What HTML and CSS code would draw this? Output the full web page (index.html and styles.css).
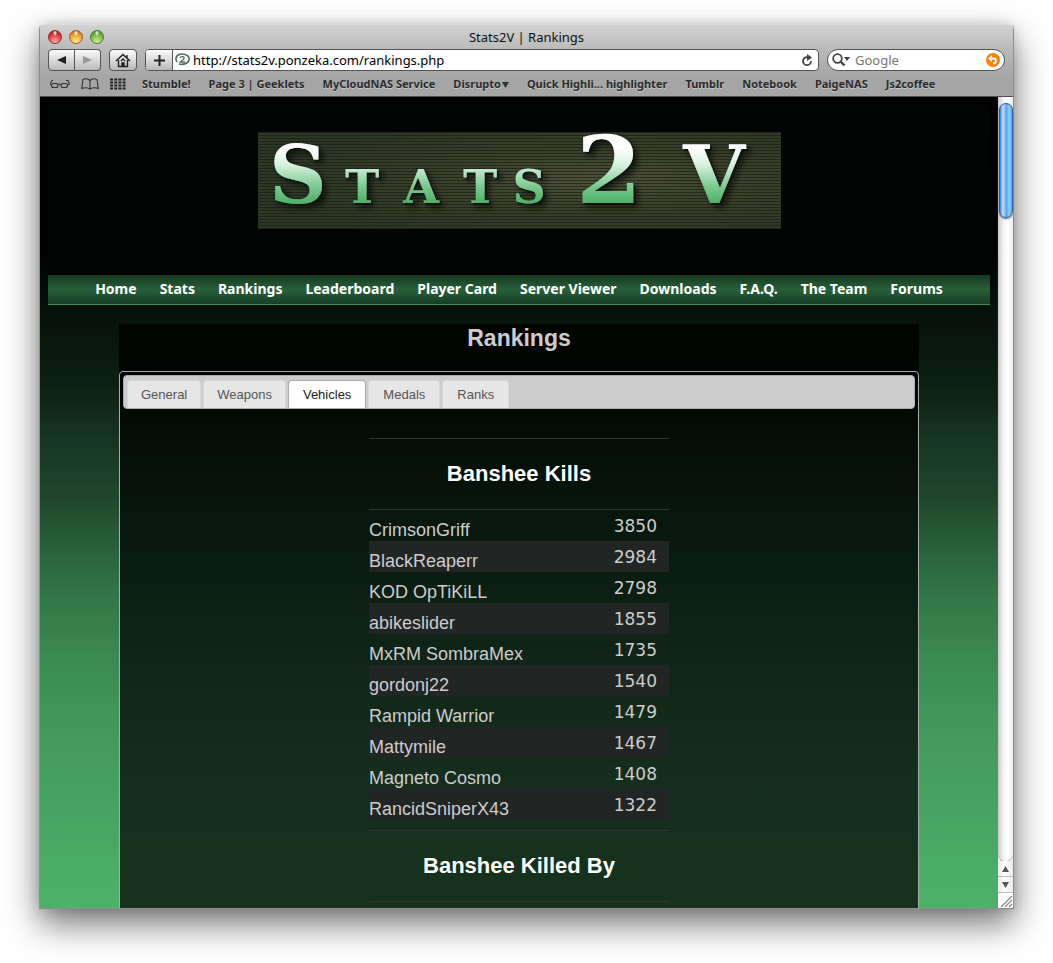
FILE: index.html
```html
<!DOCTYPE html>
<html lang="en">
<head>
<meta charset="utf-8">
<title>Stats2V | Rankings</title>
<link rel="stylesheet" href="styles.css">
</head>
<body>
<div class="window">
  <header class="chrome">
    <div class="titlebar">
      <div class="lights">
        <button class="light red" aria-label="Close"></button>
        <button class="light amber" aria-label="Minimize"></button>
        <button class="light green" aria-label="Zoom"></button>
      </div>
      <span class="window-title">Stats2V | Rankings</span>
    </div>
    <div class="toolbar">
      <div class="history">
        <button class="tool" aria-label="Back"><svg width="11" height="10" viewBox="0 0 11 10"><path d="M10 1v8L1 5z" fill="#222"/></svg></button>
        <button class="tool" aria-label="Forward"><svg width="11" height="10" viewBox="0 0 11 10"><path d="M1 1v8l9-4z" fill="#999"/></svg></button>
      </div>
      <button class="tool home" aria-label="Home"><svg width="16" height="15" viewBox="0 0 16 15" fill="none" stroke="#222" stroke-width="1.4"><path d="M1 8l7-6.500L15 8M12 5V2M3.500 7v6.500h9V7"/><path d="M6 8l2-2 2 2" /><path d="M7 10h2v3H7z" fill="#222"/></svg></button>
      <div class="address">
        <button class="tool add" aria-label="Add bookmark"><svg width="11" height="11" viewBox="0 0 11 11"><path d="M5.500 0v11M0 5.500h11" stroke="#222" stroke-width="2"/></svg></button>
        <svg class="favicon" width="16" height="14" viewBox="0 0 16 14" fill="none" stroke="#4d7360"><path d="M2 9C-1 4 3 1 7 1c5 0 8 3 7 6-1 4-7 5-10 4" stroke-width="1.600"/><path d="M5 5c1-2 5-2 4 .500C8.500 7 6 8 5 9h5" stroke-width="1.300"/></svg>
        <input class="url" type="text" aria-label="Address" value="http://stats2v.ponzeka.com/rankings.php">
        <button class="reload" aria-label="Reload"><svg width="12" height="13" viewBox="0 0 12 13"><path d="M7 3.200H5.500a4 4 0 1 0 4.500 4" fill="none" stroke="#444" stroke-width="1.900"/><path d="M6 0l5 3.400L6 7z" fill="#444"/></svg></button>
      </div>
      <div class="search">
        <svg width="19" height="14" viewBox="0 0 19 14"><circle cx="5.500" cy="5.500" r="4.300" fill="none" stroke="#444" stroke-width="1.800"/><path d="M8.500 8.500l4 4" stroke="#444" stroke-width="2.400"/><path d="M12 4h6l-3 4z" fill="#444"/></svg>
        <input type="text" aria-label="Search" placeholder="Google">
        <button class="snap" aria-label="SnapBack"><svg width="14" height="14" viewBox="0 0 14 14"><circle cx="7" cy="7" r="7" fill="#f8820c"/><path d="M5 5.500h2.500a2.400 2.400 0 0 1 0 4.800H7" fill="none" stroke="#fff" stroke-width="1.900"/><path d="M6 2v7L2 5.500z" fill="#fff"/></svg></button>
      </div>
    </div>
    <nav class="bookmarks" aria-label="Bookmarks">
      <button aria-label="Reading list"><svg width="20" height="10" viewBox="0 0 20 10" fill="none" stroke="#333" stroke-width="1.100"><rect x="1.500" y="4.500" width="6.500" height="4" rx="2"/><rect x="11" y="4.500" width="6.500" height="4" rx="2"/><path d="M8 5.500q1.500-1 3 0M1.500 6L0 5l2-3.500h1M17.500 6l2-1-1.500-3.500h-2"/></svg></button>
      <button aria-label="Show all bookmarks"><svg width="18" height="12" viewBox="0 0 18 12" fill="none" stroke="#333" stroke-width="1.100"><path d="M9 2.500v8.500M9 2.500C7 .500 4 .500 2 1.500L.700 10.500C3 9.500 7 9.500 9 11c2-1.500 6-1.500 8.300-.500L16 1.500c-2-1-5-1-7 1"/></svg></button>
      <button aria-label="Top sites"><svg width="16" height="12" viewBox="0 0 16 12"><path d="M0 1.500h16M0 4.500h16M0 7.500h16M0 10.500h16" stroke="#222" stroke-width="2" stroke-dasharray="3 1.200"/></svg></button>
      <a href="#">Stumble!</a>
      <a href="#">Page 3 | Geeklets</a>
      <a href="#">MyCloudNAS Service</a>
      <a href="#">Disrupto<svg width="7" height="6" viewBox="0 0 7 6"><path d="M0 0h7L3.500 6z" fill="#333"/></svg></a>
      <a href="#">Quick Highli... highlighter</a>
      <a href="#">Tumblr</a>
      <a href="#">Notebook</a>
      <a href="#">PaigeNAS</a>
      <a href="#">Js2coffee</a>
    </nav>
  </header>

  <div class="viewport">
    <div class="page">
      <div class="banner">
        <svg class="logo" width="523" height="97" viewBox="0 0 523 97" role="img" aria-label="Stats2V">
          <defs>
            <pattern id="lines" width="4" height="3" patternUnits="userSpaceOnUse"><path d="M0 .500h4" stroke="#1c1a22" stroke-opacity=".7"/></pattern>
            <radialGradient id="glow" cx=".65" cy=".5" r=".65"><stop offset="0" stop-color="#4c5236"/><stop offset=".5" stop-color="#384125"/><stop offset="1" stop-color="#2a3820"/></radialGradient>
            <linearGradient id="metal" gradientUnits="userSpaceOnUse" x1="0" y1="16" x2="0" y2="71"><stop offset="0" stop-color="#fff"/><stop offset=".3" stop-color="#d8f1df"/><stop offset=".7" stop-color="#79ca90"/><stop offset="1" stop-color="#4fb068"/></linearGradient>
            <filter id="bevel" x="-10%" y="-10%" width="120%" height="130%"><feDropShadow dx="2" dy="2" stdDeviation="0.400" flood-color="#07190c" flood-opacity="1"/><feDropShadow dx="3" dy="3" stdDeviation="3" flood-color="#000" flood-opacity=".6"/></filter>
          </defs>
          <rect width="523" height="97" fill="url(#glow)"/>
          <rect width="523" height="97" fill="url(#lines)"/>
          <g class="logo-text" fill="url(#metal)" filter="url(#bevel)" text-anchor="middle">
            <text class="logo-cap" x="40" y="71">S</text>
            <text class="logo-small" x="104" y="71">T</text>
            <text class="logo-small" x="163" y="71">A</text>
            <text class="logo-small" x="222" y="71">T</text>
            <text class="logo-small" x="271" y="71">S</text>
            <text class="logo-two" x="351" y="71">2</text>
            <text class="logo-cap" x="456" y="71">V</text>
          </g>
        </svg>
      </div>
      <nav class="site-nav" aria-label="Site">
        <a href="#">Home</a><a href="#">Stats</a><a href="#">Rankings</a><a href="#">Leaderboard</a><a href="#">Player Card</a><a href="#">Server Viewer</a><a href="#">Downloads</a><a href="#">F.A.Q.</a><a href="#">The Team</a><a href="#">Forums</a>
      </nav>
      <main class="content">
        <h1>Rankings</h1>
        <div class="panel">
          <div class="tabs" role="tablist">
            <button role="tab">General</button>
            <button role="tab">Weapons</button>
            <button role="tab" aria-selected="true">Vehicles</button>
            <button role="tab">Medals</button>
            <button role="tab">Ranks</button>
          </div>
          <section class="ranking">
            <h2>Banshee Kills</h2>
            <table>
              <tbody>
                <tr><th scope="row">CrimsonGriff</th><td>3850</td></tr>
                <tr><th scope="row">BlackReaperr</th><td>2984</td></tr>
                <tr><th scope="row">KOD OpTiKiLL</th><td>2798</td></tr>
                <tr><th scope="row">abikeslider</th><td>1855</td></tr>
                <tr><th scope="row">MxRM SombraMex</th><td>1735</td></tr>
                <tr><th scope="row">gordonj22</th><td>1540</td></tr>
                <tr><th scope="row">Rampid Warrior</th><td>1479</td></tr>
                <tr><th scope="row">Mattymile</th><td>1467</td></tr>
                <tr><th scope="row">Magneto Cosmo</th><td>1408</td></tr>
                <tr><th scope="row">RancidSniperX43</th><td>1322</td></tr>
              </tbody>
            </table>
          </section>
          <section class="ranking">
            <h2>Banshee Killed By</h2>
          </section>
        </div>
      </main>
    </div>
    <div class="scrollbar">
      <div class="track"><div class="thumb"></div></div>
      <button aria-label="Scroll up"><svg width="7" height="6" viewBox="0 0 7 6"><path d="M3.500 0L7 6H0z" fill="#555"/></svg></button>
      <button aria-label="Scroll down"><svg width="7" height="6" viewBox="0 0 7 6"><path d="M0 0h7L3.500 6z" fill="#555"/></svg></button>
      <svg class="grip" width="15" height="15" viewBox="0 0 15 15"><path d="M3 14L14 3M7 14l7-7M11 14l3-3" stroke="#888" stroke-width="1.200"/></svg>
    </div>
  </div>
</div>
</body>
</html>
```
FILE: styles.css
```css
* { box-sizing: border-box; }
body {
  margin: 0;
  height: 100vh;
  padding: 24px 39px 54px;
  background: #fff;
  overflow: hidden;
  font-family: "Noto Sans", "Open Sans", sans-serif;
}
button { border: 0; padding: 0; margin: 0; background: none; display: flex; align-items: center; justify-content: center; }
a { text-decoration: none; color: inherit; }
input { border: 0; outline: 0; padding: 0; background: none; min-width: 0; font: inherit; }

.window {
  height: 100%;
  display: flex;
  flex-direction: column;
  border: 1px solid #8c8c8c;
  border-top-color: #ddd;
  border-radius: 5px 5px 0 0;
  box-shadow: 0 15px 34px rgba(0, 0, 0, .55), 0 0 12px rgba(0, 0, 0, .12);
  overflow: hidden;
}

/* Browser chrome */
.chrome {
  flex: none;
  background: linear-gradient(#d2d2d2, #bababa 34%, #a5a5a5 75%, #a5a5a5);
  border-bottom: 1px solid #505050;
}
.titlebar { display: grid; grid-template-columns: 1fr auto 1fr; align-items: center; height: 23px; padding: 0 8px; }
.window-title { font-size: 13px; line-height: 22px; color: #111; }
.lights { display: flex; gap: 7px; }
.light { width: 14px; height: 14px; border-radius: 50%; border: 1px solid #666; }
.red { background: radial-gradient(ellipse at 50% 15%, #fff 0, transparent 25%), radial-gradient(circle at 50% 90%, #ffb0a8, #e0353b 60%, #8c1a1e); border-color: #912c2f; }
.amber { background: radial-gradient(ellipse at 50% 15%, #fff 0, transparent 25%), radial-gradient(circle at 50% 90%, #fff08a, #ee9a31 60%, #a45a13); border-color: #9c6323; }
.green { background: radial-gradient(ellipse at 50% 15%, #fff 0, transparent 25%), radial-gradient(circle at 50% 90%, #d3f48e, #71b53f 60%, #3c7a20); border-color: #4b7a31; }

.toolbar { display: flex; gap: 8px; padding: 1px 8px 0; }
.history { display: flex; }
.tool { width: 28px; height: 22px; border: 1px solid #555; border-radius: 4px; background: linear-gradient(#fcfcfc, #b9b9b9); }
.history .tool:first-child { width: 27px; border-radius: 4px 0 0 4px; }
.history .tool:last-child { width: 26px; border-left: 0; border-radius: 0 4px 4px 0; }
.address { flex: 1; display: flex; align-items: center; height: 22px; background: #fff; border: 1px solid #555; border-radius: 4px; }
.add { height: 20px; width: 27px; border-width: 0 1px 0 0; border-radius: 3px 0 0 3px; }
.favicon { margin-left: 2px; }
.url { flex: 1; margin-left: 2px; font-size: 13px; line-height: 20px; color: #000; }
.reload { width: 22px; }
.search { display: flex; align-items: center; gap: 4px; width: 178px; height: 22px; padding: 0 4px; border: 1px solid #555; border-radius: 11px; background: #fff; }
.search input { flex: 1; font-size: 13px; line-height: 20px; }
.search input::placeholder { color: #777; opacity: 1; }

.bookmarks { display: flex; align-items: center; height: 25px; padding-left: 10px; font-size: 11px; line-height: 16px; font-weight: 700; color: #2b2b2b; white-space: nowrap; text-shadow: 0 1px 0 #c8c8c8; }
.bookmarks button { margin-right: 11px; }
.bookmarks button + button + button { margin-right: 16px; }
.bookmarks a { margin-right: 18px; }
.bookmarks a svg { margin-left: 1px; }

/* Web page */
.viewport { flex: 1; min-height: 0; display: flex; }
.page {
  flex: 1;
  min-width: 0;
  overflow: hidden;
  padding: 8px;
  background: linear-gradient(#000 0, #010302 160px, #050f08 205px, #0d2014 290px, #143020 330px, #20482c 403px, #2b663e 463px, #337847 503px, #3b8b51 563px, #439a5b 643px, #4db268 811px);
}
.banner { height: 170px; padding-top: 27px; display: flex; justify-content: center; align-items: flex-start; background: #010403; }
.logo { overflow: visible; }
.logo-text { font-family: "DejaVu Serif", serif; font-weight: 700; }
.logo-cap { font-size: 80px; }
.logo-small { font-size: 46px; }
.logo-two { font-size: 94px; }
.site-nav {
  display: flex;
  justify-content: center;
  gap: 23px;
  height: 30px;
  background: linear-gradient(#163820, #28603a 50%, #183e24);
  border-bottom: 1px solid #3c8a55;
  color: #fff;
  font-size: 14px;
  line-height: 28px;
  font-weight: 700;
  white-space: nowrap;
}
.content {
  width: 100%;
  max-width: 800px;
  margin: 19px auto 0;
  background: linear-gradient(#010400 0, #010503 60px, #050e07 120px, #06150d 180px, #0d2014 280px, #12291a 380px, #152f1f 480px, #16321c 584px);
  color: #ccc;
}
h1 { margin: 0; height: 47px; font: bold 23px/28px "Liberation Sans", Arial, sans-serif; text-align: center; }
.panel { border: 1px solid #aaa; border-radius: 4px; padding: 3px 3px 32px; font-family: "Liberation Sans", Arial, sans-serif; }
.tabs { display: flex; gap: 2px; height: 34px; padding: 4px 3px 0; border: 1px solid #aaa; border-radius: 4px; background: #ccc; }
.tabs button { padding: 0 13px; border: 1px solid #d8d8d8; border-bottom: 0; border-radius: 4px 4px 0 0; background: #e6e6e6; color: #555; font: 13px/16px "Liberation Sans", Arial, sans-serif; }
.tabs button:nth-child(n+4) { padding: 0 14px; }
.tabs [aria-selected="true"] { padding: 0 14px; background: #fff; border-color: #aaa; color: #212121; }
.ranking { width: 300px; max-width: 100%; margin: 10px auto 0; }
.tabs + .ranking { margin-top: 29px; }
h2 { margin: 0; border: 1px solid #333; border-width: 1px 0; font-size: 22px; line-height: 70px; color: #fff; text-align: center; }
table { width: 100%; border-collapse: collapse; font-size: 18px; }
tr { height: 31px; }
tr:nth-child(even) { background: #212524; }
th { padding: 10px 0 0; font-weight: 400; line-height: 21px; text-align: left; }
td { padding: 2px 12px 0 0; font-family: "DejaVu Sans", sans-serif; font-size: 17px; line-height: 29px; text-align: right; }

/* Scroll bar */
.scrollbar { flex: none; width: 15px; display: flex; flex-direction: column; background: #f7f7f7; }
.track { flex: 1; padding: 6px 0 0 1px; background: linear-gradient(90deg, #c9c9c9, #f2f2f2 35%, #fff 65%, #ededed); border-radius: 0 0 8px 8px; box-shadow: 0 1px 1px #888; }
.thumb { height: 115px; border: 1px solid #2b5d9d; border-radius: 7px; background: linear-gradient(90deg, #2a7ae5, #b6d4f6 20%, #9cc6f4 42%, #4b9cf0 50%, #8fd0fd 75%, #5aa6ee); box-shadow: 0 1px 2px #666; }
.scrollbar button { height: 16px; border-bottom: 1px solid #bbb; background: linear-gradient(90deg, #e6e6e6, #fff 40%, #ececec); }
.grip { background: #fff; }
```
